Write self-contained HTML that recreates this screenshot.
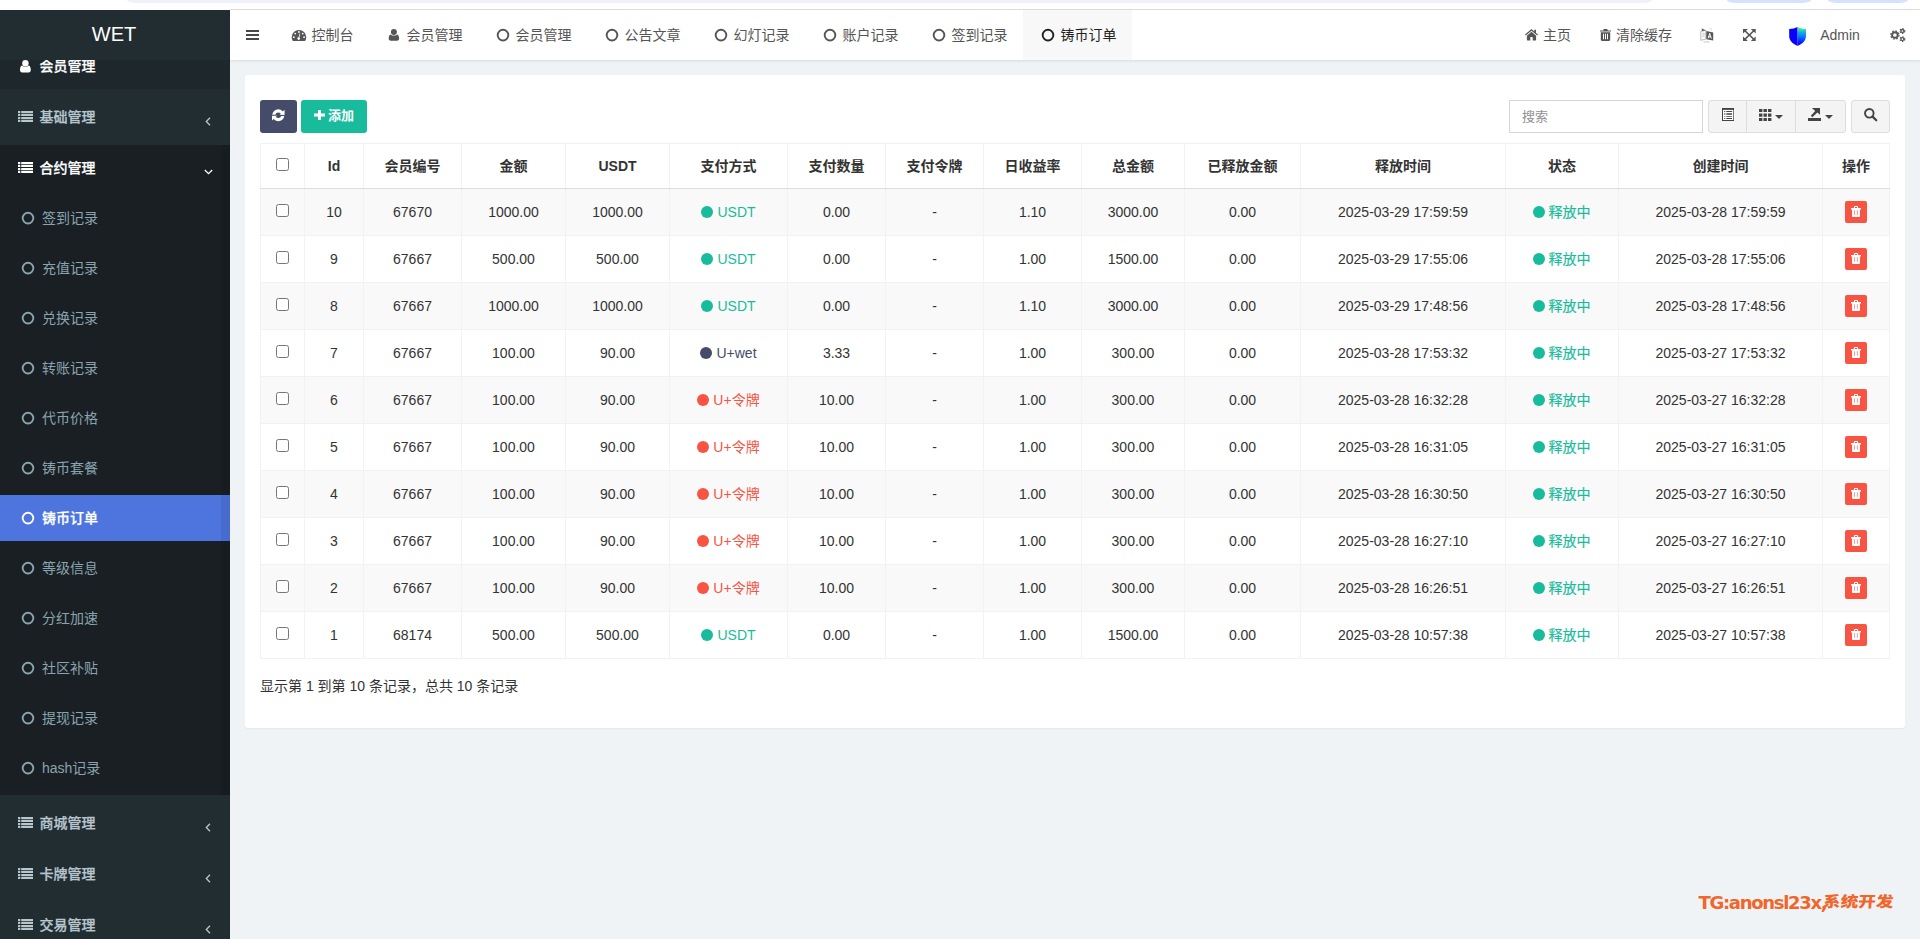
<!DOCTYPE html>
<html lang="zh-CN"><head><meta charset="utf-8"><title>WET</title>
<style>
*{box-sizing:border-box;margin:0;padding:0}
html,body{width:1920px;height:939px;overflow:hidden;background:#f0f3f6;font-family:"Liberation Sans","Noto Sans CJK SC",sans-serif;font-size:14px;color:#333}
ul{list-style:none}
svg{display:inline-block}
#chrome{position:absolute;left:0;top:0;width:1920px;height:10px;background:#fff;z-index:50}
#chrome i{position:absolute;top:0;height:3px;border-radius:0 0 9px 9px/0 0 3px 3px}
#chrome .p1{left:127px;width:1525px;background:#eef1fa}
#chrome .p2{left:1727px;width:84px;background:#d3e3fd}
#chrome .p3{left:1828px;width:80px;background:#d3e3fd}
#chrome .ln{left:230px;top:9px;width:1690px;height:1px;background:#dcdcdc;border-radius:0}
#side{position:absolute;left:0;top:10px;width:230px;height:929px;background:#222d32;overflow:hidden}
#side .logo{position:absolute;left:0;top:0;width:230px;height:50px;line-height:49px;text-align:center;color:#fff;font-size:20px;background:#222d32;z-index:5;padding-right:2px}
.menu li{position:absolute;left:0;width:230px}
.menu li.top a{display:block;height:45px;line-height:45px;padding-left:15px;font-weight:500;-webkit-text-stroke:.25px currentColor;color:#b8c7ce;position:relative;white-space:nowrap}
.menu li.top a span{margin-left:4.500px}
.menu .sicw{display:inline-block;width:20px;text-align:center}
.menu .sic{vertical-align:0px}
.menu li.top.act a{background:#1e282c;color:#fff}
.menu li.top.open a{color:#fff}
.menu li.tree{height:650px;background:#191f23}
.menu .ang{position:absolute;left:204.500px;top:22px}
.menu li.open .ang{left:204px;top:23px}
.menu li.sub a{display:block;height:46px;line-height:46px;padding-left:19px;color:#8aa4af;white-space:nowrap}
.menu li.sub a span{margin-left:5px}
.menu li.sub .ic{vertical-align:-1.700px}
.menu li.sub.on a{background:#4e74de;color:#fff;font-weight:500;-webkit-text-stroke:.25px currentColor}
.menu li.tree:after{content:"";position:absolute;right:0;top:0;width:9px;height:650px;background:rgba(0,0,0,.07)}
.menu li.sub.on a:after{content:"";position:absolute;right:0;top:0;width:9px;height:46px;background:rgba(0,0,0,.07)}
#nav{position:absolute;left:230px;top:10px;width:1690px;height:50px;background:#fff;box-shadow:0 1px 3px rgba(0,0,0,.1)}
#nav .tog{position:absolute;left:16px;top:20px;line-height:0}
#nav .tabs{position:absolute;left:44px;top:0;height:50px;white-space:nowrap;font-size:0}
#nav .tab{display:inline-block;height:50px;line-height:50px;font-size:14px;padding:0 15.500px;color:#555;vertical-align:top}
#nav .tab.active{background:#f8f8f8;color:#222}
#nav .tab .ic{vertical-align:-2px}
#nav .tab span{margin-left:4px}
#nav .right li{position:absolute;top:0;height:50px;line-height:50px;color:#555;white-space:nowrap}
#nav .right{position:absolute;left:-230px;top:0}
#nav .right .ic{vertical-align:-1px}
#panel{position:absolute;left:245px;top:75px;width:1660px;height:653px;background:#fff;border-radius:3px;box-shadow:0 1px 1px rgba(0,0,0,.05)}
.tb{position:absolute;left:0;top:0;width:1660px;height:60px}
.btn{position:absolute;top:25px;height:33px;border-radius:3px;color:#fff;line-height:33px;text-align:center;font-size:13px}
.b-ref{left:15px;width:37px;background:#444c69}
.b-add{left:56px;width:66px;background:#18bc9c;font-weight:bold}
.b-add span{margin-left:3px;position:relative;top:-1px}
.search{position:absolute;left:1264px;top:25px;width:194px;height:33px;border:1px solid #d2d6de;line-height:31px;padding-left:12px;color:#919191;font-size:13px}
.grp{position:absolute;left:1463px;top:25px;width:138px;height:33px;border:1px solid #ddd;border-radius:3px;background:#f4f4f4}
.grp a{position:absolute;top:0;height:31px;line-height:31px;text-align:center;border-right:1px solid #ddd}
.grp .g1{left:0;width:38px}.grp .g2{left:38px;width:49px}.grp .g3{left:87px;width:49px;border-right:0}
.caret{display:inline-block;width:0;height:0;border-top:4px solid #444;border-left:4px solid transparent;border-right:4px solid transparent;margin-left:3px;vertical-align:2px}
.sbtn{position:absolute;left:1606px;top:25px;width:39px;height:33px;border:1px solid #ddd;border-radius:3px;background:#f4f4f4;text-align:center;line-height:31px}
#t{position:absolute;left:15px;top:68px;width:1629px;border-collapse:collapse;table-layout:fixed}
#t th,#t td{border:1px solid #f2f2f2;text-align:center;vertical-align:middle;padding:0;white-space:nowrap}
#t th{height:45px;font-weight:bold;color:#333;border-bottom:1px solid #ddd}
#t th .cj{position:relative;top:-1px}
#t td .st.cjs{position:relative;top:-1px;left:-.5px;-webkit-text-stroke:.2px currentColor}
#t td .st.cjp{position:relative;top:-1px}
#t td{height:47px}
#t tbody tr:nth-child(odd){background:#f9f9f9}
.cb{display:inline-block;width:13px;height:13px;border:1px solid #767676;border-radius:2.500px;background:#fff;vertical-align:2px;position:relative;top:1px}
.dot{display:inline-block;width:12px;height:12px;border-radius:50%;margin-right:4px;vertical-align:-1px}
.del{position:relative;left:0;display:inline-block;width:22px;height:22px;border-radius:2px;background:#f75444;line-height:22px;text-align:center;vertical-align:middle}

.info{position:absolute;left:15px;top:600px;line-height:22px;color:#333}
#wm{position:absolute;left:0;top:0;color:#f1662a;white-space:nowrap}
#wm .l{position:absolute;left:1698.500px;top:891px;font-family:"DejaVu Sans","Liberation Sans",sans-serif;font-weight:bold;font-size:18px;line-height:24px;letter-spacing:-1.300px}
#wm .c{position:absolute;left:1822.300px;top:889px;font-family:"Noto Sans CJK SC",sans-serif;font-weight:900;font-size:15px;line-height:24px;display:inline-block;transform-origin:0 100%;transform:skewX(-5deg) scaleX(1.175)}

</style></head><body>
<div id="chrome"><i class="p1"></i><i class="p2"></i><i class="p3"></i><i class="ln"></i></div>
<aside id="side">
 <div class="logo">WET</div>
 <ul class="menu">
  <li class="top act" style="top:34px"><a><i class="sicw"><svg class="sic" width="11" height="13" viewBox="0 0 11 13" style="vertical-align:-1.500px"><g fill="#fff"><circle cx="5.400" cy="3.200" r="3.200"/><path d="M2 5.600c.9.800 2.100 1.200 3.400 1.200s2.500-.4 3.400-1.200c1.500.5 2 2.400 2 4.400 0 1.400-.8 2.400-2.100 2.400H2.100C.8 12.400 0 11.400 0 10c0-2 .5-3.900 2-4.400z"/></g></svg></i><span>会员管理</span></a></li>
  <li class="top" style="top:85px"><a><i class="sicw"><svg class="sic" width="15" height="11" viewBox="0 0 15 11" style=""><path fill="#b8c7ce" d="M0 0h2.300v2.150H0zM3.200 0H15v2.150H3.200zM0 2.950h2.300v2.150H0zM3.200 2.950H15v2.150H3.200zM0 5.900h2.300v2.150H0zM3.200 5.900H15v2.150H3.200zM0 8.850h2.300V11H0zM3.200 8.850H15V11H3.200z"/></svg></i><span>基础管理</span><svg class="ang" width="6" height="9" viewBox="0 0 6 9" style=""><path d="M5 .8L1.300 4.500 5 8.200" fill="none" stroke="#b8c7ce" stroke-width="1.300"/></svg></a></li>
  <li class="tree" style="top:135px"></li>
  <li class="top open" style="top:136px"><a><i class="sicw"><svg class="sic" width="15" height="11" viewBox="0 0 15 11" style=""><path fill="#fff" d="M0 0h2.300v2.150H0zM3.200 0H15v2.150H3.200zM0 2.950h2.300v2.150H0zM3.200 2.950H15v2.150H3.200zM0 5.900h2.300v2.150H0zM3.200 5.900H15v2.150H3.200zM0 8.850h2.300V11H0zM3.200 8.850H15V11H3.200z"/></svg></i><span>合约管理</span><svg class="ang" width="9" height="6" viewBox="0 0 9 6" style=""><path d="M.8 1l3.700 3.700L8.200 1" fill="none" stroke="#fff" stroke-width="1.300"/></svg></a></li>
  <li class="sub" style="top:185px"><a><svg class="ic" width="18" height="14" viewBox="0 0 18 14" style=""><circle cx="9" cy="7.100" r="5.350" fill="none" stroke="#8aa4af" stroke-width="1.9"/></svg><span>签到记录</span></a></li><li class="sub" style="top:235px"><a><svg class="ic" width="18" height="14" viewBox="0 0 18 14" style=""><circle cx="9" cy="7.100" r="5.350" fill="none" stroke="#8aa4af" stroke-width="1.9"/></svg><span>充值记录</span></a></li><li class="sub" style="top:285px"><a><svg class="ic" width="18" height="14" viewBox="0 0 18 14" style=""><circle cx="9" cy="7.100" r="5.350" fill="none" stroke="#8aa4af" stroke-width="1.9"/></svg><span>兑换记录</span></a></li><li class="sub" style="top:335px"><a><svg class="ic" width="18" height="14" viewBox="0 0 18 14" style=""><circle cx="9" cy="7.100" r="5.350" fill="none" stroke="#8aa4af" stroke-width="1.9"/></svg><span>转账记录</span></a></li><li class="sub" style="top:385px"><a><svg class="ic" width="18" height="14" viewBox="0 0 18 14" style=""><circle cx="9" cy="7.100" r="5.350" fill="none" stroke="#8aa4af" stroke-width="1.9"/></svg><span>代币价格</span></a></li><li class="sub" style="top:435px"><a><svg class="ic" width="18" height="14" viewBox="0 0 18 14" style=""><circle cx="9" cy="7.100" r="5.350" fill="none" stroke="#8aa4af" stroke-width="1.9"/></svg><span>铸币套餐</span></a></li><li class="sub on" style="top:485px"><a><svg class="ic" width="18" height="14" viewBox="0 0 18 14" style=""><circle cx="9" cy="7.100" r="5.350" fill="none" stroke="#fff" stroke-width="1.9"/></svg><span>铸币订单</span></a></li><li class="sub" style="top:535px"><a><svg class="ic" width="18" height="14" viewBox="0 0 18 14" style=""><circle cx="9" cy="7.100" r="5.350" fill="none" stroke="#8aa4af" stroke-width="1.9"/></svg><span>等级信息</span></a></li><li class="sub" style="top:585px"><a><svg class="ic" width="18" height="14" viewBox="0 0 18 14" style=""><circle cx="9" cy="7.100" r="5.350" fill="none" stroke="#8aa4af" stroke-width="1.9"/></svg><span>分红加速</span></a></li><li class="sub" style="top:635px"><a><svg class="ic" width="18" height="14" viewBox="0 0 18 14" style=""><circle cx="9" cy="7.100" r="5.350" fill="none" stroke="#8aa4af" stroke-width="1.9"/></svg><span>社区补贴</span></a></li><li class="sub" style="top:685px"><a><svg class="ic" width="18" height="14" viewBox="0 0 18 14" style=""><circle cx="9" cy="7.100" r="5.350" fill="none" stroke="#8aa4af" stroke-width="1.9"/></svg><span>提现记录</span></a></li><li class="sub" style="top:735px"><a><svg class="ic" width="18" height="14" viewBox="0 0 18 14" style=""><circle cx="9" cy="7.100" r="5.350" fill="none" stroke="#8aa4af" stroke-width="1.9"/></svg><span>hash记录</span></a></li>
  <li class="top" style="top:791px"><a><i class="sicw"><svg class="sic" width="15" height="11" viewBox="0 0 15 11" style=""><path fill="#b8c7ce" d="M0 0h2.300v2.150H0zM3.200 0H15v2.150H3.200zM0 2.950h2.300v2.150H0zM3.200 2.950H15v2.150H3.200zM0 5.900h2.300v2.150H0zM3.200 5.900H15v2.150H3.200zM0 8.850h2.300V11H0zM3.200 8.850H15V11H3.200z"/></svg></i><span>商城管理</span><svg class="ang" width="6" height="9" viewBox="0 0 6 9" style=""><path d="M5 .8L1.300 4.500 5 8.200" fill="none" stroke="#b8c7ce" stroke-width="1.300"/></svg></a></li>
  <li class="top" style="top:842px"><a><i class="sicw"><svg class="sic" width="15" height="11" viewBox="0 0 15 11" style=""><path fill="#b8c7ce" d="M0 0h2.300v2.150H0zM3.200 0H15v2.150H3.200zM0 2.950h2.300v2.150H0zM3.200 2.950H15v2.150H3.200zM0 5.900h2.300v2.150H0zM3.200 5.900H15v2.150H3.200zM0 8.850h2.300V11H0zM3.200 8.850H15V11H3.200z"/></svg></i><span>卡牌管理</span><svg class="ang" width="6" height="9" viewBox="0 0 6 9" style=""><path d="M5 .8L1.300 4.500 5 8.200" fill="none" stroke="#b8c7ce" stroke-width="1.300"/></svg></a></li>
  <li class="top" style="top:893px"><a><i class="sicw"><svg class="sic" width="15" height="11" viewBox="0 0 15 11" style=""><path fill="#b8c7ce" d="M0 0h2.300v2.150H0zM3.200 0H15v2.150H3.200zM0 2.950h2.300v2.150H0zM3.200 2.950H15v2.150H3.200zM0 5.900h2.300v2.150H0zM3.200 5.900H15v2.150H3.200zM0 8.850h2.300V11H0zM3.200 8.850H15V11H3.200z"/></svg></i><span>交易管理</span><svg class="ang" width="6" height="9" viewBox="0 0 6 9" style=""><path d="M5 .8L1.300 4.500 5 8.200" fill="none" stroke="#b8c7ce" stroke-width="1.300"/></svg></a></li>
 </ul>
</aside>
<header id="nav">
 <a class="tog"><svg class="ic" width="13" height="10" viewBox="0 0 13 10" style=""><path fill="#484848" d="M0 0h13v2H0zM0 4h13v2H0zM0 8h13v2H0z"/></svg></a>
 <ul class="tabs"><li class="tab"><a><svg class="ic" width="18" height="14" viewBox="0 0 18 14" style=""><g transform="translate(1.7,2)"><path fill="#555" d="M7.25 0A7.25 7.25 0 0 1 14.5 7.25c0 1.4-.4 2.7-1.1 3.75H1.1A7.2 7.2 0 0 1 0 7.25 7.25 7.25 0 0 1 7.25 0z"/><g fill="#fff"><circle cx="7.25" cy="2" r=".9"/><circle cx="3.5" cy="3.6" r=".9"/><circle cx="11" cy="3.6" r=".9"/><circle cx="2.1" cy="7.2" r=".9"/><circle cx="12.4" cy="7.2" r=".9"/><circle cx="7" cy="8.6" r="1.3"/><path d="M6.6 8.2l1.3-4.8.7.2-1.2 4.9z"/></g></g></svg><span>控制台</span></a></li><li class="tab"><a><svg class="ic" width="18" height="14" viewBox="0 0 18 14" style=""><g transform="translate(3.7,1.1)" fill="#555"><circle cx="5.2" cy="3" r="3"/><path d="M1.9 5.3c.9.8 2 1.2 3.3 1.2s2.4-.4 3.3-1.2c1.4.5 1.9 2.300 1.9 4.200 0 1.300-.8 2.200-2 2.200H2c-1.200 0-2-.9-2-2.200 0-1.900.5-3.700 1.900-4.200z"/></g></svg><span>会员管理</span></a></li><li class="tab"><a><svg class="ic" width="18" height="14" viewBox="0 0 18 14" style=""><circle cx="9" cy="7.100" r="5.350" fill="none" stroke="#555" stroke-width="1.9"/></svg><span>会员管理</span></a></li><li class="tab"><a><svg class="ic" width="18" height="14" viewBox="0 0 18 14" style=""><circle cx="9" cy="7.100" r="5.350" fill="none" stroke="#555" stroke-width="1.9"/></svg><span>公告文章</span></a></li><li class="tab"><a><svg class="ic" width="18" height="14" viewBox="0 0 18 14" style=""><circle cx="9" cy="7.100" r="5.350" fill="none" stroke="#555" stroke-width="1.9"/></svg><span>幻灯记录</span></a></li><li class="tab"><a><svg class="ic" width="18" height="14" viewBox="0 0 18 14" style=""><circle cx="9" cy="7.100" r="5.350" fill="none" stroke="#555" stroke-width="1.9"/></svg><span>账户记录</span></a></li><li class="tab"><a><svg class="ic" width="18" height="14" viewBox="0 0 18 14" style=""><circle cx="9" cy="7.100" r="5.350" fill="none" stroke="#555" stroke-width="1.9"/></svg><span>签到记录</span></a></li><li class="tab active"><a><svg class="ic" width="18" height="14" viewBox="0 0 18 14" style=""><circle cx="9" cy="7.100" r="5.350" fill="none" stroke="#222" stroke-width="1.9"/></svg><span>铸币订单</span></a></li></ul>
 <ul class="right">
  <li style="left:1525px"><svg class="ic" width="13" height="12" viewBox="0 0 13 12" style=""><path fill="#555" d="M6.500 0L0 5.600l.8.900L6.500 1.700l5.700 4.800.8-.9-2-1.700V.8H9.300v1.700zM6.500 2.800L1.900 6.700V11c0 .3.200.5.500.5h2.900V8h2.400v3.500h2.900c.3 0 .5-.2.500-.5V6.700z"/></svg><span style="margin-left:5px">主页</span></li>
  <li style="left:1600px"><svg class="ic" width="11" height="12" viewBox="0 0 11 12" style=""><path fill="#555" d="M3.800 0h3.400l.6 1.400H11v1.100H0V1.400h3.200zM.8 3.300h9.400v7.500c0 .7-.5 1.200-1.200 1.200H2c-.7 0-1.200-.5-1.200-1.200zM3 4.800v5.400h1V4.800zm2 0v5.400h1V4.800zm2 0v5.400h1V4.800z"/></svg><span style="margin-left:5px">清除缓存</span></li>
  <li style="left:1700px"><svg class="ic" width="14" height="15" viewBox="0 0 14 15" style="vertical-align:-3px"><path d="M.8 3.500l5-1.200v8.800l-5 1.200z" fill="none" stroke="#b0b0b0" stroke-width=".9"/><path d="M2.200 5.600h2.400M3.400 4.800v.8M2.300 9c1.100-.7 1.800-1.800 2.100-3.200M2.700 6.900c.5.900 1.100 1.500 1.900 1.900" stroke="#bcbcc4" stroke-width=".7" fill="none"/><path d="M1.800.4l4 1.900-4 .8z" fill="#555"/><path d="M8.800.6h2.600v2.600" fill="none" stroke="#ddd" stroke-width=".7"/><path d="M6.300 2.900L13.200 4.400v8.100L6.300 11.300z" fill="#555"/><path d="M8.200 10.300l1.500-5 1.600 5.300m-2.600-1.800h2.200" stroke="#fff" stroke-width="1" fill="none"/><path d="M3.400 13.900h6.200" stroke="#bbb" stroke-width=".8"/></svg></li>
  <li style="left:1743px"><svg class="ic" width="12.7" height="12" viewBox="0 0 13 13" preserveAspectRatio="none" style="vertical-align:-1px"><path fill="#555" d="M0 0h5L3.100 1.900l3.400 3.400 3.400-3.400L8 0h5v5l-1.900-1.900-3.400 3.400 3.400 3.400L13 8v5H8l1.900-1.900-3.400-3.400-3.400 3.400L5 13H0V8l1.900 1.900 3.400-3.400-3.400-3.400L0 5z"/></svg></li>
  <li style="left:1789px"><svg class="ic" width="17.2" height="19" viewBox="0 0 18 20" preserveAspectRatio="none" style="vertical-align:-6px"><defs><linearGradient id="sg" x1="0" y1="0" x2="0" y2="1"><stop offset="0" stop-color="#45f58c"/><stop offset=".12" stop-color="#38e49a"/><stop offset=".3" stop-color="#12a8e6"/><stop offset=".5" stop-color="#0878ff"/><stop offset=".85" stop-color="#0a0cff"/><stop offset="1" stop-color="#0a00ff"/></linearGradient></defs><path fill="#0a00ff" d="M9 0C6.500 1.300 3.500 1.900.2 2.200v7.300c0 4.500 3.300 8 8.800 10.500z"/><path fill="url(#sg)" d="M9 0c2.500 1.300 5.500 1.900 8.800 2.200v7.300c0 4.500-3.300 8-8.800 10.500z"/></svg><span style="margin-left:14px">Admin</span></li>
  <li style="left:1889px"><svg class="ic" width="17" height="14" viewBox="0 0 17 14" style="vertical-align:-1.500px"><g fill="none" stroke="#555"><circle cx="5.900" cy="7" r="2.800" stroke-width="1.900"/><circle cx="5.900" cy="7" r="4.150" stroke-width="1.200" stroke-dasharray="1.700 1.560"/><circle cx="13.400" cy="3" r="1.500" stroke-width="1.300"/><circle cx="13.400" cy="3" r="2.400" stroke-width="1.100" stroke-dasharray="1.300 1.213"/><circle cx="13.400" cy="11.100" r="1.500" stroke-width="1.300"/><circle cx="13.400" cy="11.100" r="2.400" stroke-width="1.100" stroke-dasharray="1.300 1.213"/></g></svg></li>
 </ul>
</header>
<main id="panel">
 <div class="tb">
  <a class="btn b-ref"><svg class="ic" width="12.6" height="12.4" viewBox="0 0 12.6 12.4" style="vertical-align:-.600px;margin-left:.5px"><circle cx="6.300" cy="6.200" r="4.400" fill="none" stroke="#fff" stroke-width="3.200"/><path fill="#444c69" d="M0 5.700h12.600v1.200H0zM9.300 0l1.500 2.200L12.600 0zM3.300 12.400L1.800 10.200 0 12.400z"/><path fill="#fff" d="M12.600.8v4.900H7.600zM0 11.600V6.700h5z"/></svg></a><a class="btn b-add"><svg class="ic" width="11" height="10" viewBox="0 0 11 10" style="vertical-align:1px"><path fill="#fff" d="M4 0h3v3.500h4v3H7V10H4V6.500H0v-3h4z"/></svg><span>添加</span></a>
  <div class="search">搜索</div>
  <div class="grp"><a class="g1"><svg class="ic" width="12.3" height="13" viewBox="0 0 12.3 13" style="vertical-align:0;margin-left:1.600px"><rect x=".5" y=".5" width="11.300" height="12" fill="#fff" stroke="#444" stroke-width="1"/><path fill="#444" d="M0 0h12.300v1.900H0z"/><path fill="#444" d="M2.200 3.100h1.100v.8H2.200zM4.300 3.100h5.800v.8H4.300zM2.200 5.200h1.100v1.500H2.200zM4.300 5.200h5.800v1.500H4.300zM2.200 8h1.100v.8H2.200zM4.300 8h5.800v.8H4.300zM2.200 10.100h1.100v.8H2.200zM4.300 10.100h5.800v.8H4.300z"/></svg></a><a class="g2"><svg class="ic" width="13" height="12" viewBox="0 0 13 12" style="vertical-align:0"><path fill="#444" d="M0 0h3.400v3H0zM4.500 0h3.400v3H4.500zM9 0h3.400v3H9zM0 4.400h3.400v3.300H0zM4.500 4.400h3.400v3.300H4.500zM9 4.400h3.400v3.300H9zM0 9h3.400v3H0zM4.500 9h3.400v3H4.500zM9 9h3.400v3H9z"/></svg><i class="caret"></i></a><a class="g3"><svg class="ic" width="13" height="13" viewBox="0 0 13 13" style="vertical-align:0;margin-left:-1px;margin-right:1px"><path fill="#444" d="M0 9.900h13V13H0zM3.900 0H12v6.700L9.400 4.500 4.300 9.200 2.800 7.700 7.200 3z"/></svg><i class="caret"></i></a></div>
  <a class="sbtn"><svg class="ic" width="14" height="14" viewBox="0 0 14 14" style="vertical-align:-1px"><circle cx="5.300" cy="5.300" r="4.300" fill="none" stroke="#444" stroke-width="1.900"/><path d="M8.600 8.600l3.700 3.700" stroke="#444" stroke-width="2.200" stroke-linecap="round"/></svg></a>
 </div>
 <table id="t">
  <colgroup><col style="width:44px"><col style="width:59px"><col style="width:98px"><col style="width:104px"><col style="width:104px"><col style="width:118px"><col style="width:98px"><col style="width:98px"><col style="width:98px"><col style="width:103px"><col style="width:116px"><col style="width:205px"><col style="width:113px"><col style="width:204px"><col style="width:67px"></colgroup>
  <thead><tr><th class="ck"><span class="cb"></span></th><th>Id</th><th><span class="cj">会员编号</span></th><th><span class="cj">金额</span></th><th>USDT</th><th><span class="cj">支付方式</span></th><th><span class="cj">支付数量</span></th><th><span class="cj">支付令牌</span></th><th><span class="cj">日收益率</span></th><th><span class="cj">总金额</span></th><th><span class="cj">已释放金额</span></th><th><span class="cj">释放时间</span></th><th><span class="cj">状态</span></th><th><span class="cj">创建时间</span></th><th><span class="cj">操作</span></th></tr></thead>
  <tbody>
<tr><td class="ck"><span class="cb"></span></td><td>10</td><td>67670</td><td>1000.00</td><td>1000.00</td><td><span class="st" style="color:#18bc9c"><i class="dot" style="background:#18bc9c"></i>USDT</span></td><td>0.00</td><td>-</td><td>1.10</td><td>3000.00</td><td>0.00</td><td>2025-03-29 17:59:59</td><td><span class="st cjs" style="color:#18bc9c"><i class="dot" style="background:#18bc9c"></i>释放中</span></td><td>2025-03-28 17:59:59</td><td><span class="del"><svg class="ic" width="10" height="11" viewBox="0 0 10 11" style="vertical-align:0px"><path fill="#fff" d="M2.900 2V.9c0-.5.400-.9.900-.9h2.400c.5 0 .9.400.9.900V2H10v1.400H9v6.700c0 .6-.4 1-1 1H2c-.6 0-1-.4-1-1V3.400H0V2zM4 2h2V1H4z"/><path d="M3.500 4.300v4.500M6.400 4.300v4.500" stroke="#f75444" stroke-opacity=".75" stroke-width=".8"/></svg></span></td></tr>
<tr><td class="ck"><span class="cb"></span></td><td>9</td><td>67667</td><td>500.00</td><td>500.00</td><td><span class="st" style="color:#18bc9c"><i class="dot" style="background:#18bc9c"></i>USDT</span></td><td>0.00</td><td>-</td><td>1.00</td><td>1500.00</td><td>0.00</td><td>2025-03-29 17:55:06</td><td><span class="st cjs" style="color:#18bc9c"><i class="dot" style="background:#18bc9c"></i>释放中</span></td><td>2025-03-28 17:55:06</td><td><span class="del"><svg class="ic" width="10" height="11" viewBox="0 0 10 11" style="vertical-align:0px"><path fill="#fff" d="M2.900 2V.9c0-.5.400-.9.900-.9h2.400c.5 0 .9.400.9.900V2H10v1.400H9v6.700c0 .6-.4 1-1 1H2c-.6 0-1-.4-1-1V3.400H0V2zM4 2h2V1H4z"/><path d="M3.500 4.300v4.500M6.400 4.300v4.500" stroke="#f75444" stroke-opacity=".75" stroke-width=".8"/></svg></span></td></tr>
<tr><td class="ck"><span class="cb"></span></td><td>8</td><td>67667</td><td>1000.00</td><td>1000.00</td><td><span class="st" style="color:#18bc9c"><i class="dot" style="background:#18bc9c"></i>USDT</span></td><td>0.00</td><td>-</td><td>1.10</td><td>3000.00</td><td>0.00</td><td>2025-03-29 17:48:56</td><td><span class="st cjs" style="color:#18bc9c"><i class="dot" style="background:#18bc9c"></i>释放中</span></td><td>2025-03-28 17:48:56</td><td><span class="del"><svg class="ic" width="10" height="11" viewBox="0 0 10 11" style="vertical-align:0px"><path fill="#fff" d="M2.900 2V.9c0-.5.400-.9.900-.9h2.400c.5 0 .9.400.9.900V2H10v1.400H9v6.700c0 .6-.4 1-1 1H2c-.6 0-1-.4-1-1V3.400H0V2zM4 2h2V1H4z"/><path d="M3.500 4.300v4.500M6.400 4.300v4.500" stroke="#f75444" stroke-opacity=".75" stroke-width=".8"/></svg></span></td></tr>
<tr><td class="ck"><span class="cb"></span></td><td>7</td><td>67667</td><td>100.00</td><td>90.00</td><td><span class="st" style="color:#444c69"><i class="dot" style="background:#444c69"></i>U+wet</span></td><td>3.33</td><td>-</td><td>1.00</td><td>300.00</td><td>0.00</td><td>2025-03-28 17:53:32</td><td><span class="st cjs" style="color:#18bc9c"><i class="dot" style="background:#18bc9c"></i>释放中</span></td><td>2025-03-27 17:53:32</td><td><span class="del"><svg class="ic" width="10" height="11" viewBox="0 0 10 11" style="vertical-align:0px"><path fill="#fff" d="M2.900 2V.9c0-.5.400-.9.900-.9h2.400c.5 0 .9.400.9.900V2H10v1.400H9v6.700c0 .6-.4 1-1 1H2c-.6 0-1-.4-1-1V3.400H0V2zM4 2h2V1H4z"/><path d="M3.500 4.300v4.500M6.400 4.300v4.500" stroke="#f75444" stroke-opacity=".75" stroke-width=".8"/></svg></span></td></tr>
<tr><td class="ck"><span class="cb"></span></td><td>6</td><td>67667</td><td>100.00</td><td>90.00</td><td><span class="st cjp" style="color:#f75444"><i class="dot" style="background:#f75444"></i>U+令牌</span></td><td>10.00</td><td>-</td><td>1.00</td><td>300.00</td><td>0.00</td><td>2025-03-28 16:32:28</td><td><span class="st cjs" style="color:#18bc9c"><i class="dot" style="background:#18bc9c"></i>释放中</span></td><td>2025-03-27 16:32:28</td><td><span class="del"><svg class="ic" width="10" height="11" viewBox="0 0 10 11" style="vertical-align:0px"><path fill="#fff" d="M2.900 2V.9c0-.5.400-.9.900-.9h2.400c.5 0 .9.400.9.900V2H10v1.400H9v6.700c0 .6-.4 1-1 1H2c-.6 0-1-.4-1-1V3.400H0V2zM4 2h2V1H4z"/><path d="M3.500 4.300v4.500M6.400 4.300v4.500" stroke="#f75444" stroke-opacity=".75" stroke-width=".8"/></svg></span></td></tr>
<tr><td class="ck"><span class="cb"></span></td><td>5</td><td>67667</td><td>100.00</td><td>90.00</td><td><span class="st cjp" style="color:#f75444"><i class="dot" style="background:#f75444"></i>U+令牌</span></td><td>10.00</td><td>-</td><td>1.00</td><td>300.00</td><td>0.00</td><td>2025-03-28 16:31:05</td><td><span class="st cjs" style="color:#18bc9c"><i class="dot" style="background:#18bc9c"></i>释放中</span></td><td>2025-03-27 16:31:05</td><td><span class="del"><svg class="ic" width="10" height="11" viewBox="0 0 10 11" style="vertical-align:0px"><path fill="#fff" d="M2.900 2V.9c0-.5.400-.9.900-.9h2.400c.5 0 .9.400.9.900V2H10v1.400H9v6.700c0 .6-.4 1-1 1H2c-.6 0-1-.4-1-1V3.400H0V2zM4 2h2V1H4z"/><path d="M3.500 4.300v4.500M6.400 4.300v4.500" stroke="#f75444" stroke-opacity=".75" stroke-width=".8"/></svg></span></td></tr>
<tr><td class="ck"><span class="cb"></span></td><td>4</td><td>67667</td><td>100.00</td><td>90.00</td><td><span class="st cjp" style="color:#f75444"><i class="dot" style="background:#f75444"></i>U+令牌</span></td><td>10.00</td><td>-</td><td>1.00</td><td>300.00</td><td>0.00</td><td>2025-03-28 16:30:50</td><td><span class="st cjs" style="color:#18bc9c"><i class="dot" style="background:#18bc9c"></i>释放中</span></td><td>2025-03-27 16:30:50</td><td><span class="del"><svg class="ic" width="10" height="11" viewBox="0 0 10 11" style="vertical-align:0px"><path fill="#fff" d="M2.900 2V.9c0-.5.400-.9.900-.9h2.400c.5 0 .9.400.9.900V2H10v1.400H9v6.700c0 .6-.4 1-1 1H2c-.6 0-1-.4-1-1V3.400H0V2zM4 2h2V1H4z"/><path d="M3.500 4.300v4.500M6.400 4.300v4.500" stroke="#f75444" stroke-opacity=".75" stroke-width=".8"/></svg></span></td></tr>
<tr><td class="ck"><span class="cb"></span></td><td>3</td><td>67667</td><td>100.00</td><td>90.00</td><td><span class="st cjp" style="color:#f75444"><i class="dot" style="background:#f75444"></i>U+令牌</span></td><td>10.00</td><td>-</td><td>1.00</td><td>300.00</td><td>0.00</td><td>2025-03-28 16:27:10</td><td><span class="st cjs" style="color:#18bc9c"><i class="dot" style="background:#18bc9c"></i>释放中</span></td><td>2025-03-27 16:27:10</td><td><span class="del"><svg class="ic" width="10" height="11" viewBox="0 0 10 11" style="vertical-align:0px"><path fill="#fff" d="M2.900 2V.9c0-.5.400-.9.900-.9h2.400c.5 0 .9.400.9.900V2H10v1.400H9v6.700c0 .6-.4 1-1 1H2c-.6 0-1-.4-1-1V3.400H0V2zM4 2h2V1H4z"/><path d="M3.500 4.300v4.500M6.400 4.300v4.500" stroke="#f75444" stroke-opacity=".75" stroke-width=".8"/></svg></span></td></tr>
<tr><td class="ck"><span class="cb"></span></td><td>2</td><td>67667</td><td>100.00</td><td>90.00</td><td><span class="st cjp" style="color:#f75444"><i class="dot" style="background:#f75444"></i>U+令牌</span></td><td>10.00</td><td>-</td><td>1.00</td><td>300.00</td><td>0.00</td><td>2025-03-28 16:26:51</td><td><span class="st cjs" style="color:#18bc9c"><i class="dot" style="background:#18bc9c"></i>释放中</span></td><td>2025-03-27 16:26:51</td><td><span class="del"><svg class="ic" width="10" height="11" viewBox="0 0 10 11" style="vertical-align:0px"><path fill="#fff" d="M2.900 2V.9c0-.5.400-.9.900-.9h2.400c.5 0 .9.400.9.900V2H10v1.400H9v6.700c0 .6-.4 1-1 1H2c-.6 0-1-.4-1-1V3.400H0V2zM4 2h2V1H4z"/><path d="M3.500 4.300v4.500M6.400 4.300v4.500" stroke="#f75444" stroke-opacity=".75" stroke-width=".8"/></svg></span></td></tr>
<tr><td class="ck"><span class="cb"></span></td><td>1</td><td>68174</td><td>500.00</td><td>500.00</td><td><span class="st" style="color:#18bc9c"><i class="dot" style="background:#18bc9c"></i>USDT</span></td><td>0.00</td><td>-</td><td>1.00</td><td>1500.00</td><td>0.00</td><td>2025-03-28 10:57:38</td><td><span class="st cjs" style="color:#18bc9c"><i class="dot" style="background:#18bc9c"></i>释放中</span></td><td>2025-03-27 10:57:38</td><td><span class="del"><svg class="ic" width="10" height="11" viewBox="0 0 10 11" style="vertical-align:0px"><path fill="#fff" d="M2.900 2V.9c0-.5.400-.9.900-.9h2.400c.5 0 .9.400.9.900V2H10v1.400H9v6.700c0 .6-.4 1-1 1H2c-.6 0-1-.4-1-1V3.400H0V2zM4 2h2V1H4z"/><path d="M3.500 4.300v4.500M6.400 4.300v4.500" stroke="#f75444" stroke-opacity=".75" stroke-width=".8"/></svg></span></td></tr>
  </tbody>
 </table>
 <div class="info">显示第 1 到第 10 条记录，总共 10 条记录</div>
</main>
<div id="wm"><span class="l">TG:anonsl23x,</span><span class="c">系统开发</span></div>
</body></html>
